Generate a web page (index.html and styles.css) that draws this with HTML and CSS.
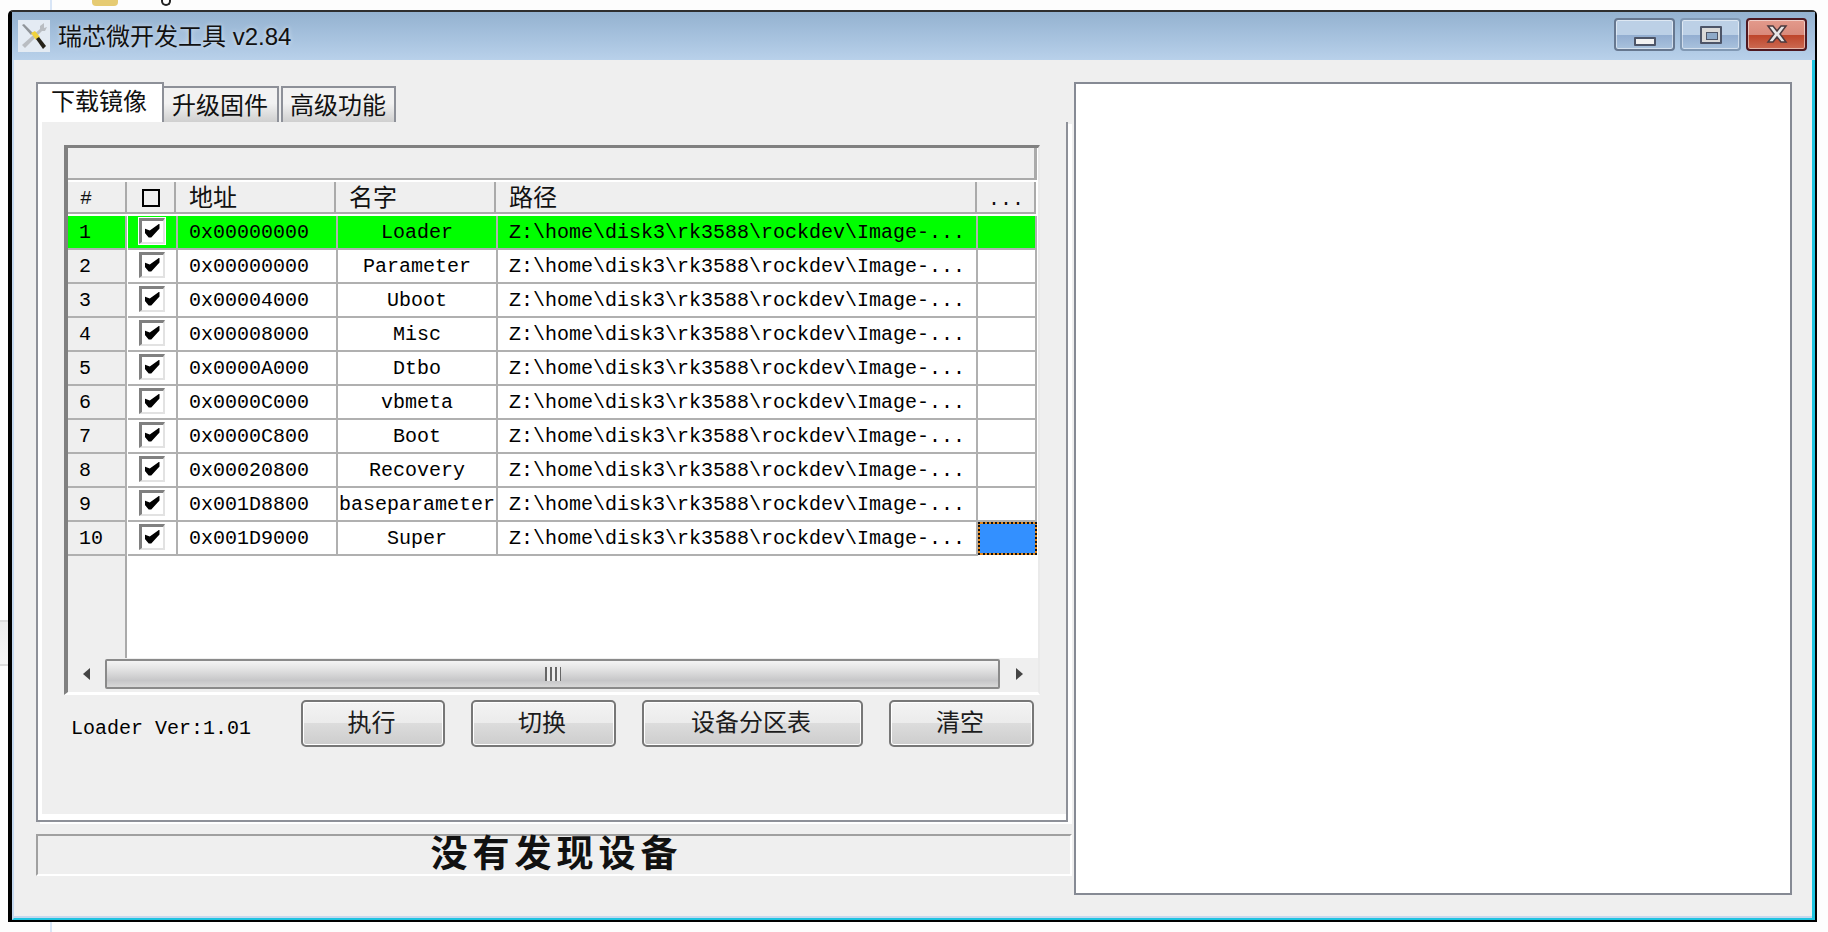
FILE: index.html
```html
<!DOCTYPE html>
<html lang="zh-CN">
<head>
    <meta charset="UTF-8">
    <meta name="viewport" content="width=device-width, initial-scale=1.0">
    <title>瑞芯微开发工具 v2.84</title>
    <link rel="stylesheet" href="styles.css">
</head>
<body>
    <div class="desk-line"></div>
    <div class="desk-folder"></div>
    <div class="desk-ring"></div>
    <div class="desk-tab"></div>

    <div class="window">
        <div class="titlebar">
            <svg class="app-icon" width="32" height="32" viewBox="0 0 32 32">
                <rect width="32" height="32" fill="#e4ebf3"/>
                <path d="M26 3 L22 6 L22 9 L4 25 L7 28 L24 11 L27 11 L29 7 L26 8 Z" fill="#b9bdc2"/>
                <path d="M4 5 L6 4 L15 13 L13 15 Z" fill="#8f9499"/>
                <path d="M13 13 L17 11 L22 17 L18 20 Z" fill="#f0d23c"/>
                <path d="M18 19 L21 17 L28 26 L25 29 Z" fill="#26231a"/>
            </svg>
            <span class="app-title">瑞芯微开发工具 v2.84</span>
            <div class="caption-buttons">
                <div class="caption-btn btn-min"><span class="min-glyph"></span></div>
                <div class="caption-btn btn-max"><span class="max-glyph"></span></div>
                <div class="caption-btn btn-close">
                    <svg width="24" height="20" viewBox="0 0 24 20">
                        <path d="M3 2 L8 2 L12 7 L16 2 L21 2 L15 10 L21 18 L16 18 L12 13 L8 18 L3 18 L9 10 Z" fill="#e6e6e6" stroke="#4c3a3e" stroke-width="1.5"/>
                    </svg>
                </div>
            </div>
        </div>

        <div class="client">
            <div class="left-col">
                <div class="tabs">
                    <div class="tab tab-active">下载镜像</div>
                    <div class="tab">升级固件</div>
                    <div class="tab tab-last">高级功能</div>
                </div>

                <div class="panel">
                    <div class="table-box">
                        <div class="band"></div>
                        <div class="head">
                            <div class="hcell hcell-num">#</div>
                            <div class="hcell hcell-chk"><span class="head-box"></span></div>
                            <div class="hcell hcell-cjk">地址</div>
                            <div class="hcell hcell-cjk">名字</div>
                            <div class="hcell hcell-cjk">路径</div>
                            <div class="hcell hcell-more">...</div>
                        </div>
                        <div class="rows">
                            <div class="row row-on">
                                <div class="cell cell-num">1</div>
                                <div class="cell cell-chk"><span class="check"></span></div>
                                <div class="cell cell-addr">0x00000000</div>
                                <div class="cell cell-name">Loader</div>
                                <div class="cell cell-path">Z:\home\disk3\rk3588\rockdev\Image-...</div>
                                <div class="cell"></div>
                            </div>
                            <div class="row">
                                <div class="cell cell-num">2</div>
                                <div class="cell cell-chk"><span class="check"></span></div>
                                <div class="cell cell-addr">0x00000000</div>
                                <div class="cell cell-name">Parameter</div>
                                <div class="cell cell-path">Z:\home\disk3\rk3588\rockdev\Image-...</div>
                                <div class="cell"></div>
                            </div>
                            <div class="row">
                                <div class="cell cell-num">3</div>
                                <div class="cell cell-chk"><span class="check"></span></div>
                                <div class="cell cell-addr">0x00004000</div>
                                <div class="cell cell-name">Uboot</div>
                                <div class="cell cell-path">Z:\home\disk3\rk3588\rockdev\Image-...</div>
                                <div class="cell"></div>
                            </div>
                            <div class="row">
                                <div class="cell cell-num">4</div>
                                <div class="cell cell-chk"><span class="check"></span></div>
                                <div class="cell cell-addr">0x00008000</div>
                                <div class="cell cell-name">Misc</div>
                                <div class="cell cell-path">Z:\home\disk3\rk3588\rockdev\Image-...</div>
                                <div class="cell"></div>
                            </div>
                            <div class="row">
                                <div class="cell cell-num">5</div>
                                <div class="cell cell-chk"><span class="check"></span></div>
                                <div class="cell cell-addr">0x0000A000</div>
                                <div class="cell cell-name">Dtbo</div>
                                <div class="cell cell-path">Z:\home\disk3\rk3588\rockdev\Image-...</div>
                                <div class="cell"></div>
                            </div>
                            <div class="row">
                                <div class="cell cell-num">6</div>
                                <div class="cell cell-chk"><span class="check"></span></div>
                                <div class="cell cell-addr">0x0000C000</div>
                                <div class="cell cell-name">vbmeta</div>
                                <div class="cell cell-path">Z:\home\disk3\rk3588\rockdev\Image-...</div>
                                <div class="cell"></div>
                            </div>
                            <div class="row">
                                <div class="cell cell-num">7</div>
                                <div class="cell cell-chk"><span class="check"></span></div>
                                <div class="cell cell-addr">0x0000C800</div>
                                <div class="cell cell-name">Boot</div>
                                <div class="cell cell-path">Z:\home\disk3\rk3588\rockdev\Image-...</div>
                                <div class="cell"></div>
                            </div>
                            <div class="row">
                                <div class="cell cell-num">8</div>
                                <div class="cell cell-chk"><span class="check"></span></div>
                                <div class="cell cell-addr">0x00020800</div>
                                <div class="cell cell-name">Recovery</div>
                                <div class="cell cell-path">Z:\home\disk3\rk3588\rockdev\Image-...</div>
                                <div class="cell"></div>
                            </div>
                            <div class="row">
                                <div class="cell cell-num">9</div>
                                <div class="cell cell-chk"><span class="check"></span></div>
                                <div class="cell cell-addr">0x001D8800</div>
                                <div class="cell cell-name">baseparameter</div>
                                <div class="cell cell-path">Z:\home\disk3\rk3588\rockdev\Image-...</div>
                                <div class="cell"></div>
                            </div>
                            <div class="row">
                                <div class="cell cell-num">10</div>
                                <div class="cell cell-chk"><span class="check"></span></div>
                                <div class="cell cell-addr">0x001D9000</div>
                                <div class="cell cell-name">Super</div>
                                <div class="cell cell-path">Z:\home\disk3\rk3588\rockdev\Image-...</div>
                                <div class="cell cell-focus"></div>
                            </div>
                            <div class="row-empty"><div class="cell-num"></div></div>
                        </div>
                        <div class="scrollbar">
                            <div class="scroll-end"><span class="arrow-left"></span></div>
                            <div class="scroll-thumb"><span class="grip"></span></div>
                            <div class="scroll-end"><span class="arrow-right"></span></div>
                        </div>
                    </div>

                    <div class="actions">
                        <div class="loader-ver">Loader Ver:1.01</div>
                        <button class="action-btn btn-run">执行</button>
                        <button class="action-btn btn-switch">切换</button>
                        <button class="action-btn btn-parts">设备分区表</button>
                        <button class="action-btn btn-clear">清空</button>
                    </div>
                </div>

                <div class="status">没有发现设备</div>
            </div>

            <div class="log"></div>
        </div>
    </div>
</body>
</html>
```

FILE: styles.css
```css
* {
    box-sizing: border-box;
}
html, body {
    height: 100%;
}
body {
    margin: 0;
    padding: 10px 0 0 8px;
    background-color: #fdfdfd;
    color: #000;
    font-family: "Liberation Sans", "Noto Sans CJK SC", sans-serif;
    overflow: hidden;
    position: relative;
}

/* bits of the desktop showing behind the window */
.desk-line {
    position: absolute;
    left: 50px;
    top: 0;
    width: 2px;
    height: 100%;
    background-color: #d8e5f6;
}
.desk-folder {
    position: absolute;
    left: 92px;
    top: 0;
    width: 26px;
    height: 6px;
    background-color: #e6cb72;
    border-radius: 0 0 4px 4px;
}
.desk-ring {
    position: absolute;
    left: 161px;
    top: 0;
    width: 10px;
    height: 6px;
    border: 2px solid #222;
    border-top: none;
    border-radius: 0 0 5px 5px;
}
.desk-tab {
    position: absolute;
    left: 0;
    top: 620px;
    width: 8px;
    height: 46px;
    background: linear-gradient(#ededed, #f6f6f6);
    border-top: 2px solid #dcdcdc;
    border-bottom: 2px solid #dcdcdc;
}

.window {
    position: relative;
    width: 1809px;
    height: 912px;
    display: flex;
    flex-direction: column;
    border-style: solid;
    border-color: #2e2e2e #000 #000 #000;
    border-width: 2px 2px 2px 4px;
    border-radius: 5px 5px 0 0;
    background-color: #efefef;
}

.titlebar {
    height: 48px;
    flex: none;
    display: flex;
    align-items: center;
    padding: 0 8px 0 6px;
    background: linear-gradient(#94b2d0, #a9c4e0 60%, #b9d1ea);
}
.app-icon {
    flex: none;
    margin-right: 8px;
}
.app-title {
    padding-top: 2px;
    font-size: 24px;
    line-height: 30px;
    color: #111;
    text-shadow: 0 0 5px rgba(255, 255, 255, 0.6);
}
.caption-buttons {
    margin-left: auto;
    display: flex;
    gap: 5px;
    height: 33px;
    margin-top: -4px;
}
.caption-btn {
    width: 61px;
    height: 33px;
    display: flex;
    align-items: center;
    justify-content: center;
    border: 2px solid #66778f;
    border-radius: 4px;
    box-shadow: inset 0 0 0 1px rgba(255, 255, 255, 0.5);
    background: linear-gradient(#bcd0e6 50%, #92add0 50%, #a9c2dd);
    padding-top: 8px;
}
.btn-max {
    border-color: #8098b3;
}
.btn-close {
    border-color: #4e1820;
    background: linear-gradient(#e39a8c, #d98a7b 50%, #bd4328 50%, #cc6a52);
    padding-top: 0;
}
.btn-min {
    padding-top: 14px;
}
.btn-max {
    padding-top: 1px;
}
.min-glyph {
    width: 22px;
    height: 9px;
    background-color: #f1f1f1;
    border: 2px solid #4d5568;
    border-radius: 1px;
}
.max-glyph {
    width: 22px;
    height: 18px;
    background-color: #d9d9d9;
    border: 2px solid #4d5568;
    border-radius: 1px;
    position: relative;
}
.max-glyph::after {
    content: "";
    position: absolute;
    left: 4px;
    top: 4px;
    width: 10px;
    height: 6px;
    background-color: #8ea9c8;
    border: 1px solid #4d5568;
}

.client {
    flex: 1;
    display: flex;
    gap: 2px;
    padding: 22px 20px 23px 22px;
    border-left: 2px solid #c5d8ee;
    border-right: 3px solid #1fc4e0;
    border-bottom: 2px solid #1fc4e0;
    box-shadow: inset 0 -2px 0 #c5d8ee;
    background-color: #efefef;
}
.left-col {
    width: 1036px;
    flex: none;
    display: flex;
    flex-direction: column;
}

.tabs {
    height: 40px;
    flex: none;
    display: flex;
    align-items: flex-end;
}
.tab {
    width: 115px;
    height: 36px;
    padding-left: 8px;
    font-size: 24px;
    line-height: 35px;
    color: #111;
    border-style: solid;
    border-color: #8d9098;
    border-width: 2px 2px 0 0;
    background: linear-gradient(#f2f2f2 45%, #cfcfcf);
}
.tab-active {
    width: 128px;
    height: 40px;
    padding-left: 13px;
    border-width: 2px 2px 0 2px;
    background: #fff;
    line-height: 36px;
}
.tab-last {
    width: 115px;
    margin-left: 2px;
    border-left-width: 2px;
    padding-left: 7px;
}

.panel {
    width: 1032px;
    height: 700px;
    flex: none;
    padding: 23px 26px 0 26px;
    border: 2px solid #8d9098;
    border-top: none;
    background-color: #efefef;
    box-shadow: 4px 2px 0 #fff, inset 4px -6px 0 #fff;
}

.table-box {
    height: 550px;
    display: flex;
    flex-direction: column;
    border-style: solid;
    border-color: #808080 #eaeaea #fff #808080;
    border-width: 3px 2px 3px 4px;
    background-color: #fff;
}
.band {
    height: 32px;
    flex: none;
    margin-right: 1px;
    background-color: #efefef;
    border-right: 3px solid #aaa;
    border-bottom: 2px solid #aaa;
}
.head {
    height: 32px;
    margin-top: 2px;
    flex: none;
    display: grid;
    grid-template-columns: 59px 49px 160px 160px 481px 59px;
}
.hcell {
    display: flex;
    align-items: center;
    padding: 2px 0 0 13px;
    font-size: 24px;
    line-height: 1;
    color: #111;
    background-color: #efefef;
    border-right: 2px solid #aaa;
    border-bottom: 2px solid #aaa;
}
.hcell-num {
    font-family: "Liberation Mono", monospace;
    font-size: 20px;
    padding: 4px 0 0 12px;
}
.hcell-chk {
    padding: 1px 0 0 15px;
}
.head-box {
    width: 18px;
    height: 18px;
    border: 2px solid #000;
}
.hcell-more {
    font-family: "Liberation Mono", monospace;
    font-size: 20px;
    padding: 6px 0 0 11px;
}

.rows {
    flex: 1;
    display: flex;
    flex-direction: column;
    padding-top: 2px;
    margin-top: 0;
    font-family: "Liberation Mono", monospace;
    font-size: 20px;
}
.row {
    height: 34px;
    flex: none;
    display: grid;
    grid-template-columns: 60px 50px 160px 160px 480px 59px;
}
.cell {
    display: flex;
    align-items: center;
    border-right: 2px solid #b0b0b0;
    border-bottom: 2px solid #b0b0b0;
    white-space: nowrap;
}
.cell-num {
    margin-right: 1px;
    padding-left: 11px;
    background-color: #efefef;
}
.cell-chk {
    justify-content: center;
    padding-right: 1px;
}
.cell-addr {
    padding-left: 11px;
}
.cell-name {
    justify-content: center;
}
.cell-path {
    padding-left: 11px;
}
.row-on .cell {
    background-color: #00ff00;
}
.cell-focus {
    margin-bottom: 1px;
    border: 2px dotted #111;
    background: linear-gradient(#3390ff, #3390ff) padding-box, #e58a1f border-box;
}
.row-empty {
    flex: 1;
    display: flex;
}
.row-empty .cell-num {
    width: 59px;
    border-right: 2px solid #aaa;
}

.check {
    width: 26px;
    height: 26px;
    margin-top: -3px;
    position: relative;
    background-color: #fff;
    border-style: solid;
    border-color: #808080 #e2e2e2 #e2e2e2 #808080;
    border-width: 3px 2px 2px 3px;
}
.check::after {
    content: "";
    position: absolute;
    left: 3px;
    top: 3px;
    width: 15px;
    height: 14px;
    background-color: #000;
    clip-path: polygon(0 35%, 35% 50%, 100% 0, 100% 35%, 45% 100%, 28% 100%, 0 65%);
}
.row-on .check {
    box-shadow: 0 0 0 1px #fff;
}

.scrollbar {
    height: 34px;
    flex: none;
    display: flex;
    padding-top: 1px;
    background-color: #efefef;
}
.scroll-end {
    width: 37px;
    flex: none;
    height: 30px;
    display: flex;
    align-items: center;
    justify-content: center;
}
.scroll-end:last-child {
    width: 38px;
}
.arrow-left {
    width: 0;
    height: 0;
    border-style: solid;
    border-width: 6px 7px 6px 0;
    border-color: transparent #444 transparent transparent;
}
.arrow-right {
    width: 0;
    height: 0;
    border-style: solid;
    border-width: 6px 0 6px 7px;
    border-color: transparent transparent transparent #444;
}
.scroll-thumb {
    flex: 1;
    height: 30px;
    display: flex;
    align-items: center;
    justify-content: center;
    border: 2px solid #8a8a8a;
    border-radius: 2px;
    background: linear-gradient(#f4f4f4, #e4e4e4 30%, #c6c6c8 75%, #d8d8d8);
}
.grip {
    width: 16px;
    height: 14px;
    background: repeating-linear-gradient(90deg, #666 0 2px, #eee 2px 5px);
}

.actions {
    display: flex;
    align-items: center;
    gap: 26px;
    height: 47px;
    margin-top: 5px;
    padding-left: 7px;
}
.loader-ver {
    width: 204px;
    padding-top: 10px;
    font-family: "Liberation Mono", monospace;
    font-size: 20px;
    line-height: 24px;
}
.action-btn {
    height: 47px;
    padding: 0 3px 1px 0;
    font-family: inherit;
    font-size: 24px;
    line-height: 1;
    color: #1c1c1c;
    border: 2px solid #777;
    border-radius: 5px;
    box-shadow: inset 0 0 0 1px #fff;
    background: linear-gradient(#f3f3f3, #ebebeb 50%, #dcdcdc 50%, #cdcdcd);
}
.btn-run {
    width: 144px;
}
.btn-switch {
    width: 145px;
}
.btn-parts {
    width: 221px;
}
.btn-clear {
    width: 145px;
}

.status {
    height: 42px;
    margin-top: 12px;
    flex: none;
    padding-left: 5px;
    text-align: center;
    font-size: 37px;
    font-weight: 700;
    letter-spacing: 5px;
    line-height: 38px;
    color: #111;
    border-style: solid;
    border-color: #a0a0a0 #fff #fff #a0a0a0;
    border-width: 2px;
}

.log {
    width: 718px;
    flex: none;
    background-color: #fff;
    border: 2px solid #868a94;
}
```
